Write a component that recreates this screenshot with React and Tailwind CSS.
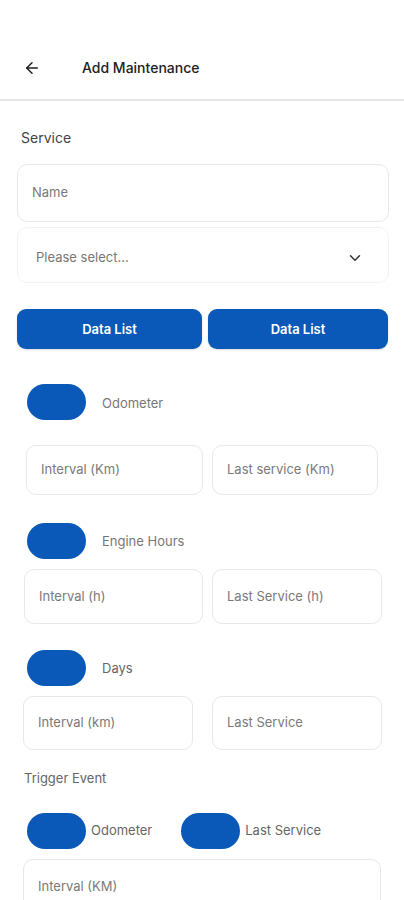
import React from "react";
import { ArrowLeft, ChevronDown } from "lucide-react";

const font = { fontFamily: "Inter, 'Noto Sans', sans-serif" };

function Field({ text, className }) {
  return (
    <div
      className={
        "flex items-center rounded-[10px] border border-[#e8e8e8] bg-white pl-[14px] text-[13px] text-[#7a7a7a] " +
        className
      }
    >
      {text}
    </div>
  );
}

function Toggle({ className = "" }) {
  return <div className={"h-[36px] w-[59px] rounded-full bg-[#0a58b8] " + className} />;
}

export default function App() {
  return (
    <div className="min-h-[900px] w-[404px] overflow-hidden bg-white" style={font}>
      {/* Header */}
      <div className="flex items-center border-b-2 border-[#e6e6e6] pb-[19px] pt-[56px]">
        <div className="ml-[23px] flex h-[24px] w-[18px] items-center">
          <ArrowLeft size={18} strokeWidth={2} color="#1f1f1f" />
        </div>
        <div className="ml-[41px] text-[14px] font-medium leading-[24px] text-[#222]">
          Add Maintenance
        </div>
      </div>

      {/* Service */}
      <div className="ml-[21px] mt-[27px] text-[14px] leading-[20px] text-[#444]">Service</div>

      <Field text="Name" className="ml-[17px] mt-[16px] h-[58px] w-[372px] pl-[14px]" />

      <div className="ml-[17px] mt-[5px] flex h-[56px] w-[372px] items-center justify-between rounded-[10px] border border-[#f3f3f3] pl-[18px] pr-[24px] pt-[6px] text-[13px] text-[#777]">
        <span>Please select...</span>
        <ChevronDown size={18} strokeWidth={2} color="#333" />
      </div>

      {/* Buttons */}
      <div className="ml-[17px] mt-[26px] flex gap-[6px]">
        <div className="flex h-[40px] w-[185px] items-center justify-center rounded-[9px] bg-[#0a58b8] pt-[2px] text-[13px] font-semibold text-white shadow-[0_1px_2px_rgba(0,0,0,0.15)]">
          Data List
        </div>
        <div className="flex h-[40px] w-[180px] items-center justify-center rounded-[9px] bg-[#0a58b8] pt-[2px] text-[13px] font-semibold text-white shadow-[0_1px_2px_rgba(0,0,0,0.15)]">
          Data List
        </div>
      </div>

      {/* Odometer */}
      <div className="ml-[27px] mt-[35px] flex items-center gap-[16px]">
        <Toggle />
        <span className="pt-[3px] text-[13px] text-[#777]">Odometer</span>
      </div>
      <div className="mt-[25px] flex">
        <Field text="Interval (Km)" className="ml-[26px] h-[50px] w-[177px]" />
        <Field text="Last service (Km)" className="ml-[9px] h-[50px] w-[166px] pl-[12px]" />
      </div>

      {/* Engine hours */}
      <div className="ml-[27px] mt-[28px] flex items-center gap-[16px]">
        <Toggle className="h-[35px]" />
        <span className="pt-[2px] text-[13px] text-[#777]">Engine Hours</span>
      </div>
      <div className="mt-[10px] flex">
        <Field text="Interval (h)" className="ml-[24px] h-[55px] w-[179px] pl-[12px]" />
        <Field text="Last Service (h)" className="ml-[9px] h-[55px] w-[170px] pl-[12px]" />
      </div>

      {/* Days */}
      <div className="ml-[27px] mt-[26px] flex items-center gap-[16px]">
        <Toggle />
        <span className="pt-[2px] text-[13px] text-[#666]">Days</span>
      </div>
      <div className="mt-[10px] flex">
        <Field text="Interval (km)" className="ml-[23px] h-[54px] w-[170px] pl-[13px]" />
        <Field text="Last Service" className="ml-[19px] h-[54px] w-[170px] pl-[12px]" />
      </div>

      {/* Trigger event */}
      <div className="ml-[24px] mt-[18px] text-[13px] leading-[20px] text-[#666]">Trigger Event</div>
      <div className="ml-[27px] mt-[25px] flex items-center">
        <Toggle className="h-[35px] w-[58px]" />
        <span className="ml-[5px] text-[13px] text-[#666]">Odometer</span>
        <Toggle className="ml-[29px] h-[35px] w-[58px]" />
        <span className="ml-[5px] text-[13px] text-[#666]">Last Service</span>
      </div>
      <Field text="Interval (KM)" className="ml-[23px] mt-[10px] h-[56px] w-[358px] pl-[13px]" />
    </div>
  );
}
